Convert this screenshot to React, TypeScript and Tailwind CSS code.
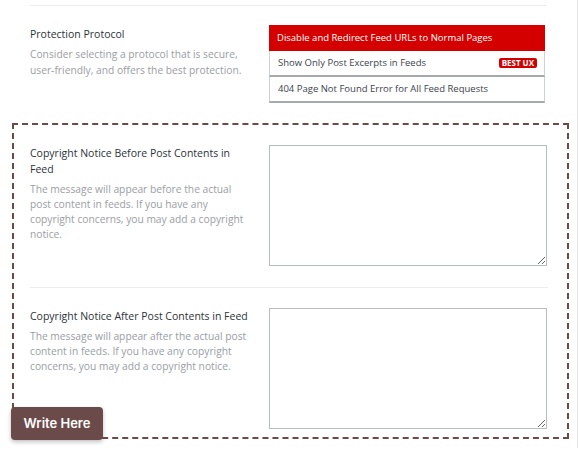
import React from "react";

const options = [
  { label: "Disable and Redirect Feed URLs to Normal Pages", active: true },
  { label: "Show Only Post Excerpts in Feeds", badge: "BEST UX" },
  { label: "404 Page Not Found Error for All Feed Requests" },
];

function Field({ title, desc }: { title: React.ReactNode; desc: React.ReactNode }) {
  return (
    <div className="flex">
      <div className="w-[220px] shrink-0">
        <h3 className="text-[10.5px] leading-[16px] font-medium text-[#2c3338]">{title}</h3>
        <p className="mt-[5px] text-[10.25px] leading-[15px] text-[#9a9ea3]">{desc}</p>
      </div>
      <textarea className="ml-[19px] w-[278px] h-[121px] border border-[#b9bcc0] bg-white" />
    </div>
  );
}

export default function App() {
  return (
    <div className="relative w-[578px] h-[456px] bg-white overflow-hidden" style={{ fontFamily: '"Open Sans", "Noto Sans", sans-serif' }}>
      <div className="h-[448px] border-r border-[#e6e6e6] pt-[5px]">
        <div className="mx-[30px] w-[517px] border-t border-[#ececec]" />

        <div className="flex ml-[30px] mt-[19px]">
          <div className="w-[239px] shrink-0 pt-[1px]">
            <h3 className="text-[10.5px] leading-[16px] font-medium text-[#2c3338]">Protection Protocol</h3>
            <p className="mt-[4px] w-[220px] text-[10.25px] leading-[16px] text-[#9a9ea3]">
              Consider selecting a protocol that is secure, user&#8209;friendly, and offers the best protection.
            </p>
          </div>
          <div className="w-[276px]">
            {options.map((o) =>
              o.active ? (
                <div key={o.label} className="h-[26px] bg-[#d40000] px-[8px] flex items-center text-[9.5px] text-white">
                  {o.label}
                </div>
              ) : (
                <div key={o.label} className="h-[26px] border-x border-[#cfd1d4] border-b-2 border-b-[#a7aaad] px-[8px] flex items-center justify-between text-[9.5px] text-[#3c434a]">
                  <span>{o.label}</span>
                  {o.badge && (
                    <span className="bg-[#d40000] text-white text-[8px] font-bold leading-[10px] px-[3px] rounded-[2px] mr-[-1px]">{o.badge}</span>
                  )}
                </div>
              )
            )}
          </div>
        </div>

        <div className="ml-[12px] mt-[20px] w-[557px] border-2 border-dashed border-[#6b4a48] pl-[16px] pr-[19px] pt-[20px] pb-[8px]">
          <Field
            title="Copyright Notice Before Post Contents in Feed"
            desc="The message will appear before the actual post content in feeds. If you have any copyright concerns, you may add a copyright notice."
          />
          <div className="mt-[21px] mb-[20px] border-t border-[#ececec]" />
          <Field
            title="Copyright Notice After Post Contents in Feed"
            desc="The message will appear after the actual post content in feeds. If you have any copyright concerns, you may add a copyright notice."
          />
        </div>
      </div>

      <button
        className="absolute left-[11px] top-[407px] w-[92px] h-[33px] rounded-[4px] bg-[#6b4a4a] text-white text-[13px] font-semibold shadow-[0_2px_4px_rgba(0,0,0,0.25)]"
        style={{ fontFamily: "Inter, sans-serif" }}
      >
        Write Here
      </button>
    </div>
  );
}
